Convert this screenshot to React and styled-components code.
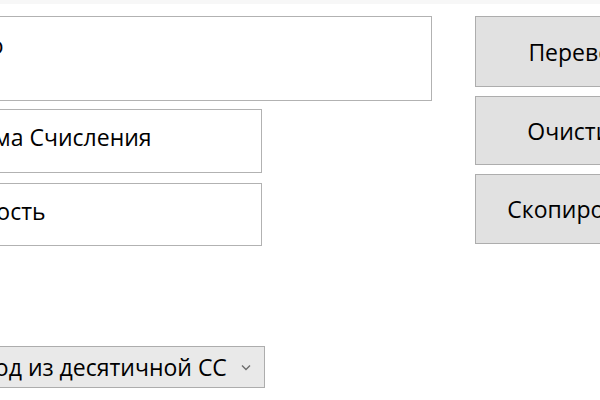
import React from "react";
import styled, { createGlobalStyle } from "styled-components";

const GlobalStyle = createGlobalStyle`
  html, body {
    margin: 0;
    padding: 0;
    background: #ffffff;
  }
  body {
    font-family: "Open Sans", "Noto Sans", sans-serif;
    color: #000000;
  }
`;

const Window = styled.div`
  width: 600px;
  height: 400px;
  overflow: hidden;
  background: #ffffff;
  border-top: 4px solid #f7f7f7;
  box-sizing: border-box;
  padding-top: 12px;
`;

const Form = styled.div`
  display: flex;
  align-items: flex-start;
  gap: 43px;
  margin-left: -60px;
`;

const Fields = styled.div`
  display: flex;
  flex-direction: column;
`;

const TextBox = styled.div`
  box-sizing: border-box;
  width: ${(p) => p.$width}px;
  height: ${(p) => p.$height}px;
  margin-bottom: ${(p) => p.$gap || 0}px;
  border: 1px solid #b2b2b2;
  background: #ffffff;
  padding-top: ${(p) => p.$top}px;
  text-indent: ${(p) => p.$indent}px;
  font-size: 23px;
  line-height: 28px;
  white-space: nowrap;
  overflow: hidden;
`;

const Combo = styled.div`
  box-sizing: border-box;
  width: 325px;
  height: 42px;
  margin-top: 100px;
  display: flex;
  align-items: center;
  justify-content: space-between;
  padding-right: 13px;
  border: 1px solid #adadad;
  background: #e9e9e9;
  font-size: 23px;
  white-space: nowrap;
  overflow: hidden;
`;

const ComboText = styled.span`
  margin-left: ${(p) => p.$indent}px;
`;

const Chevron = styled.svg`
  width: 10px;
  height: 7px;
  flex: none;
`;

const Buttons = styled.div`
  display: flex;
  flex-direction: column;
  gap: 9px;
`;

const Button = styled.button`
  box-sizing: border-box;
  width: 212px;
  height: ${(p) => p.$height}px;
  border: 1px solid #adadad;
  background: #e1e1e1;
  font-family: "Open Sans", "Noto Sans", sans-serif;
  font-size: 23px;
  color: #000000;
  padding: 0 0 0 ${(p) => p.$nudge || 0}px;
  white-space: nowrap;
`;

export default function App() {
  return (
    <>
      <GlobalStyle />
      <Window>
        <Form>
          <Fields>
            <TextBox $width={492} $height={85} $gap={8} $top={14} $indent={-6}>
              Число
            </TextBox>
            <TextBox $width={322} $height={64} $gap={10} $top={13} $indent={-11}>
              Система Счисления
            </TextBox>
            <TextBox $width={322} $height={63} $top={13} $indent={-37}>
              Разрядность
            </TextBox>
            <Combo>
              <ComboText $indent={-16}>Перевод из десятичной СС</ComboText>
              <Chevron viewBox="0 0 10 7">
                <path d="M1 1.5 L5 5.5 L9 1.5" fill="none" stroke="#6d6d6d" strokeWidth="1.4" />
              </Chevron>
            </Combo>
          </Fields>
          <Buttons>
            <Button $height={71} $nudge={14}>Перевести</Button>
            <Button $height={69}>Очистить</Button>
            <Button $height={70}>Скопировать</Button>
          </Buttons>
        </Form>
      </Window>
    </>
  );
}
